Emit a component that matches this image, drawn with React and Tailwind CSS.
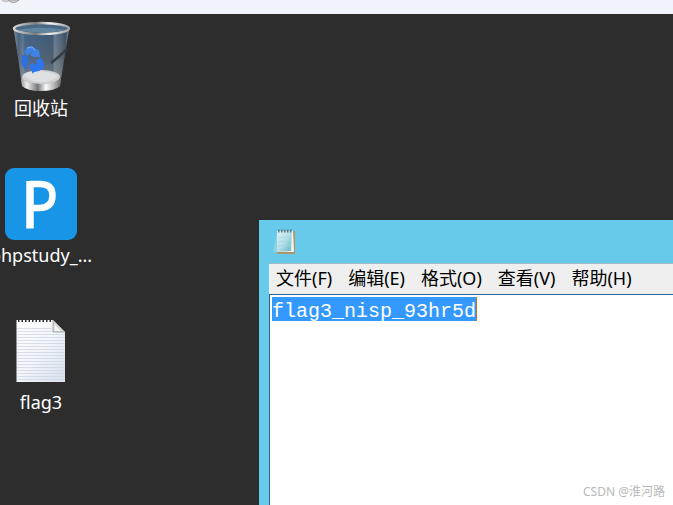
import { useState } from "react";

const menus = ["文件(F)", "编辑(E)", "格式(O)", "查看(V)", "帮助(H)"];

const RecycleBinIcon = () => (
  <svg viewBox="0 0 72 72" className="h-[72px] w-[72px]" aria-hidden="true">
    <defs>
      <linearGradient id="glass" x1="0" y1="0" x2="1" y2="0">
        <stop offset="0" stopColor="#a9b3bc" />
        <stop offset="0.08" stopColor="#4f6478" />
        <stop offset="0.16" stopColor="#75889a" />
        <stop offset="0.2" stopColor="#4a6885" />
        <stop offset="0.7" stopColor="#45596c" />
        <stop offset="0.74" stopColor="#7d8c99" />
        <stop offset="0.86" stopColor="#5c6973" />
        <stop offset="0.93" stopColor="#454d54" />
        <stop offset="1" stopColor="#8f979c" />
      </linearGradient>
      <linearGradient id="shade" x1="0" y1="0" x2="0" y2="1">
        <stop offset="0" stopColor="#2c5a88" stopOpacity="0.4" />
        <stop offset="0.45" stopColor="#5d6a76" stopOpacity="0.3" />
        <stop offset="0.8" stopColor="#8a9095" stopOpacity="0.6" />
        <stop offset="1" stopColor="#b5b8ba" stopOpacity="0.8" />
      </linearGradient>
      <linearGradient id="metal" x1="0" y1="0" x2="1" y2="0">
        <stop offset="0" stopColor="#9a9a9a" />
        <stop offset="0.15" stopColor="#efefef" />
        <stop offset="0.42" stopColor="#777" />
        <stop offset="0.62" stopColor="#fafafa" />
        <stop offset="0.82" stopColor="#b8b8b8" />
        <stop offset="1" stopColor="#6c6c6c" />
      </linearGradient>
      <linearGradient id="rim" x1="0" y1="0" x2="1" y2="0">
        <stop offset="0" stopColor="#d8d8d8" />
        <stop offset="0.4" stopColor="#7d7d7d" />
        <stop offset="0.65" stopColor="#f5f5f5" />
        <stop offset="1" stopColor="#a2a2a2" />
      </linearGradient>
    </defs>
    <path d="M9 9 L17 64 Q36 72 55 64 L64 9 Z" fill="url(#glass)" />
    <path d="M9 9 L17 64 Q36 72 55 64 L64 9 Z" fill="url(#shade)" />
    <path d="M46 42 Q54 36 62 28" stroke="#343c44" strokeWidth="2.500" fill="none" />
    <ellipse cx="36" cy="56" rx="19" ry="7" fill="#cfd1d2" />
    <path d="M19 54 Q27 48 36 50 Q46 51 53 55 Q45 62 33 61 Q24 60 19 54 Z" fill="#dfe0e1" />
    <path d="M16 56 Q20 63 36 63 Q52 63 56 56 L55 65 Q50 70 36 70 Q22 70 17 65 Z" fill="url(#metal)" />
    <g>
      <path d="M19 31 L22 26 L27 25 L31 28 L34 29 L35 36 L28 36 L25 34 L27 31 L25 32 L22 35 Z" fill="#3d82e4" />
      <path d="M16 34 L22 35 L25 41 L22 41 L22 49 L18 46 L16 41 L17 38 Z" fill="#2e6ee0" />
      <path d="M24 45 L28 41 L29 44 L32 43 L31 39 L36 37 L39 43 L38 48 L34 50 L29 51 L28 53 Z" fill="#2e75f0" />
      <path d="M22 27 L27 26 L30 29" stroke="#79aff3" strokeWidth="1" fill="none" />
    </g>
    <ellipse cx="36.500" cy="7.500" rx="27.500" ry="5.500" fill="#496883" stroke="url(#rim)" strokeWidth="2.500" />
    <path d="M12 9 Q36 4 61 9 Q36 14 12 9 Z" fill="#61849f" />
  </svg>
);

const PhpStudyIcon = () => (
  <svg viewBox="0 0 72 72" className="h-[72px] w-[72px]" aria-hidden="true">
    <rect width="72" height="72" rx="9" fill="#1995e8" />
    <path d="M25 60.500 V13" fill="none" stroke="#fff" strokeWidth="7.500" />
    <path d="M25 16 H35 Q47.500 16 47.500 27.500 Q47.500 40 34 40 H25" fill="none" stroke="#fff" strokeWidth="6.500" />
  </svg>
);

const TextFileIcon = () => (
  <svg viewBox="0 0 72 72" className="h-[72px] w-[72px]" aria-hidden="true">
    <defs>
      <linearGradient id="paper" x1="0" y1="0" x2="1" y2="1">
        <stop offset="0" stopColor="#fff" />
        <stop offset="0.5" stopColor="#f3f5f9" />
        <stop offset="1" stopColor="#d9e1ec" />
      </linearGradient>
    </defs>
    <path d="M11.500 5 H48 L60 17 V67 H11.500 Z" fill="url(#paper)" />
    <path d="M13 5.500 H48" stroke="#2d2d2d" strokeWidth="3" strokeDasharray="1.500 2" />
    {[13, 16, 19, 22, 25, 28, 31, 34, 37, 40, 43, 46, 49, 52, 55, 58, 61, 64].map((y) => (
      <path key={y} d={`M12 ${y + 0.5} H${y < 18 ? 47 : 60}`} stroke="#cbd7e6" strokeWidth="0.800" />
    ))}
    <path d="M48 5 L60 17 H48 Z" fill="#d4d4d4" stroke="#9a9a9a" strokeWidth="0.800" />
    <path d="M49.500 9 V16 H56 Z" fill="#f5f5f5" />
  </svg>
);

const NotepadIcon = () => (
  <svg viewBox="0 0 24 26" className="h-[26px] w-6" aria-hidden="true">
    <defs>
      <linearGradient id="cover" x1="0" y1="0" x2="1" y2="1">
        <stop offset="0" stopColor="#dff3f7" />
        <stop offset="0.5" stopColor="#b4dfe8" />
        <stop offset="1" stopColor="#5fb3c6" />
      </linearGradient>
    </defs>
    <path d="M4 5 L0 22 L4 23 Z" fill="#8fd2e2" />
    <path d="M4 2 H22 V25 H4 Z" fill="#b0946a" />
    <path d="M4 2 H20 L21 23 H4 Z" fill="#f3f5ee" />
    <path d="M4 2 H19 L18 22 L4 23 Z" fill="url(#cover)" />
    <path d="M5 8.500 H18 M5 12.500 H18 M5 16.500 H18" stroke="#9fd3de" strokeWidth="0.600" />
    <path d="M5 2 H20" stroke="#66777b" strokeWidth="3" strokeDasharray="1.500 1.500" />
  </svg>
);

const desktopItems = [
  { id: "recycle", label: "回收站", icon: <RecycleBinIcon /> },
  { id: "phpstudy", label: "phpstudy_...", icon: <PhpStudyIcon /> },
  { id: "flag3", label: "flag3", icon: <TextFileIcon /> },
];

const NotepadWindow = () => {
  const [text, setText] = useState("flag3_nisp_93hr5d");

  return (
    <section className="absolute top-[206px] right-0 bottom-0 left-[259px] flex flex-col bg-[#67caea] pl-[10px]">
      {/* Title bar */}
      <header className="flex h-[43px] shrink-0 items-center pl-1">
        <NotepadIcon />
      </header>

      {/* Menu bar */}
      <nav className="flex h-[31px] shrink-0 items-center gap-4 border-t border-[#a0bac5] bg-[#efefef] pb-[2px] pl-[7px]">
        {menus.map((menu) => (
          <button key={menu} type="button" className="text-[18px] leading-6 whitespace-nowrap text-black">
            {menu}
          </button>
        ))}
      </nav>

      {/* Text area */}
      <div className="flex-1 border-t border-l border-[#2b6299] bg-white pt-[2px] pl-[2px]">
        <input
          type="text"
          aria-label="文本"
          value={text}
          onChange={(e) => setText(e.target.value)}
          className="block h-6 w-[205px] border-r border-[#c8701c] bg-[#3399ff] pt-1 font-['Liberation_Mono','Noto_Sans_CJK_SC',monospace] text-[20px] leading-5 text-white outline-none"
        />
      </div>
    </section>
  );
};

const App = () => {
  return (
    <div className="flex h-screen flex-col overflow-hidden bg-[#2d2d2d] font-['Noto_Sans','Noto_Sans_CJK_SC',sans-serif]">
      {/* Host toolbar */}
      <div className="h-[14px] shrink-0 bg-[#f0f4fa]">
        <svg viewBox="0 0 22 4" className="h-1 w-[22px]" aria-hidden="true">
          <path d="M1 0 Q3 3 8 2 L10 0 Z" fill="#c9c9c9" />
          <path d="M8 0 Q13 5 19 0 Z" fill="#d8d8d8" stroke="#999" />
        </svg>
      </div>

      <main className="relative flex-1">
        <div className="flex w-[82px] flex-col gap-12 pt-[7px]">
          {desktopItems.map((item) => (
            <button key={item.id} type="button" className="flex flex-col items-center gap-[3px]">
              {item.icon}
              <span className="text-[18px] leading-6 whitespace-nowrap text-white">{item.label}</span>
            </button>
          ))}
        </div>

        <NotepadWindow />

        <span className="absolute right-2 bottom-[5px] text-[12px] leading-4 text-[#b8b8b8]">
          CSDN @淮河路
        </span>
      </main>
    </div>
  );
};

export default App;
